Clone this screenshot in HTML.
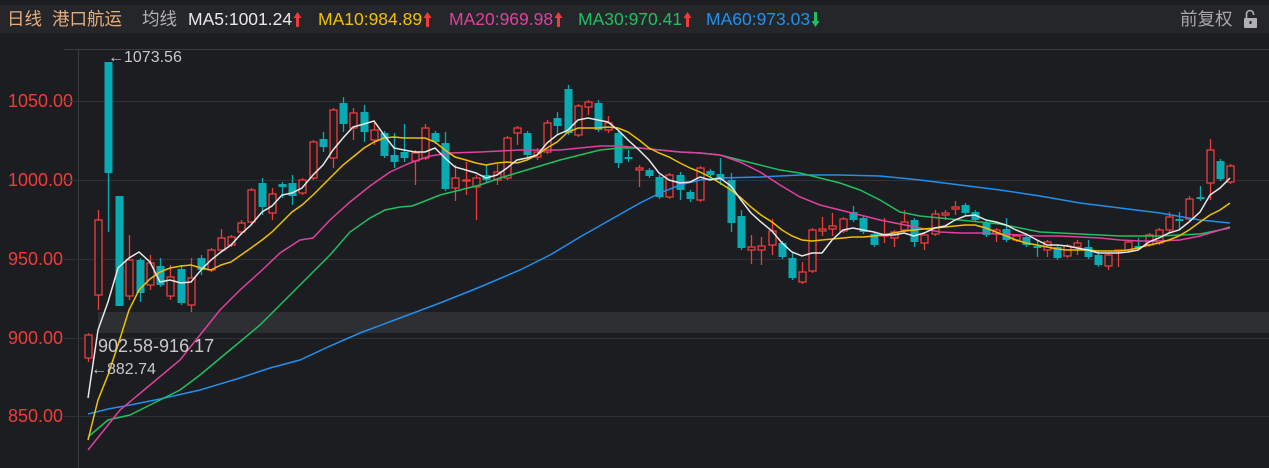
<!DOCTYPE html>
<html><head><meta charset="utf-8"><style>
body{margin:0;width:1269px;height:468px;background:#1c1d21;overflow:hidden;font-family:"Liberation Sans","Noto Sans CJK SC",sans-serif;position:relative}
.hdr{position:absolute;left:0;top:5px;width:1269px;height:28px;background:#25262a}
.t{position:absolute;top:9px;font-size:17.5px;line-height:20px;white-space:nowrap}
.t svg{position:static;vertical-align:-2px;margin-left:1px}
.ax{position:absolute;left:8px;font-size:18px;line-height:20px;color:#f03b3b}
.an{position:absolute;font-size:16px;color:#c8c8c8;white-space:nowrap}
#s{position:absolute;left:0;top:0}
</style></head><body>
<div class="hdr"></div>
<div class="t" style="left:7px;color:#e6ad7e">日线</div>
<div class="t" style="left:52px;color:#e6ad7e">港口航运</div>
<div class="t" style="left:142px;color:#b0b0b0">均线</div>
<div class="t" style="left:188px;color:#e8e8e8">MA5:1001.24<svg width="9" height="16"><path d="M4.5 1L8.5 7H6V16H3V7H0.5Z" fill="#f03b3b"/></svg></div>
<div class="t" style="left:318px;color:#f0c000">MA10:984.89<svg width="9" height="16"><path d="M4.5 1L8.5 7H6V16H3V7H0.5Z" fill="#f03b3b"/></svg></div>
<div class="t" style="left:449px;color:#e040a0">MA20:969.98<svg width="9" height="16"><path d="M4.5 1L8.5 7H6V16H3V7H0.5Z" fill="#f03b3b"/></svg></div>
<div class="t" style="left:578px;color:#20c060">MA30:970.41<svg width="9" height="16"><path d="M4.5 1L8.5 7H6V16H3V7H0.5Z" fill="#f03b3b"/></svg></div>
<div class="t" style="left:706px;color:#2090f0">MA60:973.03<svg width="9" height="16"><path d="M4.5 16L8.5 10H6V1H3V10H0.5Z" fill="#20c060"/></svg></div>
<div class="t" style="left:1180px;color:#a8a8a8">前复权</div>
<div class="ax" style="top:91px">1050.00</div>
<div class="ax" style="top:170px">1000.00</div>
<div class="ax" style="top:249px">950.00</div>
<div class="ax" style="top:328px">900.00</div>
<div class="ax" style="top:406px">850.00</div>
<svg id="s" width="1269" height="468"></svg>
<div class="an" style="left:108px;top:49px">←1073.56</div>
<div class="an" style="left:98px;top:336px;font-size:18px">902.58-916.17</div>
<div class="an" style="left:91px;top:361px">←882.74</div>
<script>
var s='';
s+='<rect x="98" y="312" width="1171" height="21" fill="#2e2f33"/>';
s+='<line x1="64" y1="49.5" x2="1269" y2="49.5" stroke="#3a3b3f"/>';
s+='<line x1="78.5" y1="49" x2="78.5" y2="468" stroke="#3a3b3f"/>';
[101,180,259,338,416].forEach(function(y){s+='<line x1="64" y1="'+(y+.5)+'" x2="1269" y2="'+(y+.5)+'" stroke="#303135"/>';});
s+='<rect x="1244" y="18" width="13" height="10" rx="1" fill="#b0b0b0"/><path d="M1246.5 18v-4a3.5 3.5 0 0 1 7 0v1" fill="none" stroke="#b0b0b0" stroke-width="1.6"/><rect x="1249.5" y="21" width="2" height="3" fill="#25262a"/>';
function pl(p,c){s+='<polyline fill="none" stroke="'+c+'" stroke-width="1.5" points="'+p+'"/>';}
var R=[[88,335,358,333,362],[98,220,295,210,310],[129,260,296,235,300],[150,263,285,255,290],[170,277,296,265,300],[191,278,305,258,312],[211,250,270,248,272],[221,238,250,229,252],[231,237,245,235,247],[241,223,232,220,235],[251,190,222,188,224],[272,194,213,188,220],[302,180,193,178,195],[313,142,178,140,180],[333,110,158,108,168],[353,113,128,108,140],[374,130,140,123,145],[415,153,161,150,185],[425,128,158,124,160],[455,178,188,165,201],[466,180,181,162,195],[476,178,187,175,220],[497,172,180,164,185],[507,138,178,136,180],[517,128,133,126,145],[537,152,157,148,160],[547,123,152,120,154],[578,106,135,104,137],[588,102,107,100,115],[608,123,130,116,133],[639,168,170,165,187],[669,175,197,173,199],[700,168,200,166,202],[751,247,250,235,264],[761,246,250,237,265],[772,231,245,219,255],[802,272,282,262,284],[812,230,271,228,273],[822,229,231,217,236],[832,226,229,213,236],[843,219,231,217,233],[884,234,236,218,243],[894,232,238,230,247],[904,222,230,210,232],[924,235,243,233,250],[935,214,234,210,236],[945,213,215,210,220],[955,207,209,201,215],[996,230,234,228,242],[1016,236,240,234,242],[1047,242,250,240,257],[1067,246,256,244,258],[1077,243,247,240,255],[1108,255,266,253,270],[1118,250,251,250,267],[1128,242,250,240,252],[1149,235,245,233,247],[1159,230,243,228,245],[1169,217,230,212,232],[1189,199,219,196,221],[1210,150,183,139,200],[1230,166,182,164,184]];
var T=[[108,62,173,62,232],[119,196,306,196,306],[140,260,293,258,302],[160,266,285,258,287],[181,269,303,265,305],[201,258,270,255,275],[262,183,207,178,215],[282,184,187,182,198],[292,183,196,175,205],[323,139,147,132,152],[343,103,124,97,132],[364,112,132,105,142],[384,133,156,131,158],[394,155,162,133,168],[404,152,158,124,162],[435,133,142,131,144],[445,143,189,132,191],[486,175,180,165,182],[527,133,155,131,157],[557,118,126,112,135],[568,89,133,85,135],[598,103,130,100,132],[618,133,163,131,168],[628,157,159,150,162],[649,170,176,168,178],[659,177,197,175,199],[680,175,190,172,200],[690,192,199,190,202],[710,171,175,169,177],[720,174,180,158,185],[731,180,223,173,232],[741,216,248,210,250],[782,243,257,241,259],[792,258,278,253,280],[853,212,220,206,222],[863,218,232,216,234],[874,234,245,232,247],[914,220,242,218,247],[965,205,213,203,215],[975,212,220,210,222],[986,223,235,221,237],[1006,229,240,218,242],[1026,237,245,235,247],[1037,246,247,240,257],[1057,247,258,245,260],[1088,247,257,240,259],[1098,255,265,250,267],[1138,246,248,238,250],[1179,219,221,212,230],[1200,197,199,186,201],[1220,161,179,159,181]];
R.forEach(function(c){s+='<line x1="'+(c[0]+.5)+'" y1="'+c[3]+'" x2="'+(c[0]+.5)+'" y2="'+c[4]+'" stroke="#f03b3b" stroke-width="1.3"/><rect x="'+(c[0]-3)+'" y="'+c[1]+'" width="7" height="'+Math.max(1,c[2]-c[1])+'" fill="#1c1d21" stroke="#f03b3b" stroke-width="1.3"/>';});
T.forEach(function(c){s+='<line x1="'+(c[0]+.5)+'" y1="'+c[3]+'" x2="'+(c[0]+.5)+'" y2="'+c[4]+'" stroke="#08aab4" stroke-width="1.3"/><rect x="'+(c[0]-3.5)+'" y="'+c[1]+'" width="8" height="'+Math.max(2,c[2]-c[1])+'" fill="#08aab4"/>';});
pl("88,414 108,409 130,405 160,399 200,390 240,378 270,368 300,360 330,346 360,333 400,318 440,303 480,287 520,270 550,255 580,237 610,220 640,203 660,193 680,185 700,180 720,178 760,177 800,175 840,175 880,176 920,180 960,185 1000,190 1040,196 1080,203 1120,208 1160,213 1200,220 1230,223","#2090f0");
pl("88,437 108,420 130,415 150,405 180,390 200,375 230,350 260,325 290,295 310,275 330,255 350,232 370,218 385,210 400,207 412,206 420,203 440,195 460,190 480,185 500,178 520,172 540,166 560,160 580,155 600,150 620,148 640,148 660,150 680,152 700,153 720,155 740,160 760,165 780,170 800,173 820,178 840,183 860,190 880,200 900,212 920,216 940,218 960,220 980,222 1000,224 1020,228 1040,232 1060,233 1080,234 1100,235 1120,236 1140,236 1160,236 1180,235 1200,234 1220,230 1230,227","#20c060");
pl("88,450 100,435 120,410 150,385 180,360 200,335 220,310 240,290 260,272 280,253 300,240 313,238 330,220 350,202 370,186 390,172 410,163 430,156 450,153 480,152 500,151 520,150 540,150 560,150 580,148 600,146 620,146 640,148 660,150 680,152 700,153 720,155 740,162 760,172 780,185 800,197 820,205 840,210 860,215 880,220 900,224 920,228 940,232 960,233 980,233 1000,234 1020,235 1040,236 1060,236 1080,237 1100,238 1120,240 1140,241 1160,241 1180,240 1200,236 1220,230 1230,228","#e040a0");
pl("88,440 98,400 108,375 118,345 129,310 139,290 150,279 160,272 170,268 181,266 191,265 201,268 211,270 221,265 231,262 241,255 251,248 262,240 272,232 282,222 292,212 302,205 313,195 323,185 333,175 343,165 353,157 364,148 374,142 384,138 394,137 404,138 415,138 425,138 435,142 445,150 455,157 466,160 476,163 486,165 497,163 507,162 517,163 527,160 537,155 547,148 557,142 568,132 578,128 588,128 598,128 608,127 618,128 628,132 639,140 649,148 659,153 669,157 680,163 690,168 700,172 710,177 720,183 731,190 741,198 751,207 761,215 772,222 782,230 792,236 802,240 812,241 822,240 832,239 843,238 853,237 863,237 874,236 884,235 894,233 904,231 914,230 924,229 935,228 945,227 955,226 965,225 975,225 986,228 996,232 1006,236 1016,240 1026,243 1037,245 1047,247 1057,249 1067,250 1077,250 1088,250 1098,251 1108,251 1118,251 1128,250 1138,248 1149,245 1159,243 1169,240 1179,236 1189,230 1200,222 1210,215 1220,210 1230,203","#f0c000");
pl("88,398 98,330 108,302 118,268 129,258 139,252 150,262 160,282 170,280 181,283 191,282 201,270 211,260 221,252 231,245 241,234 251,225 262,212 272,206 282,195 292,193 302,188 313,175 323,165 333,150 343,138 353,127 364,124 374,121 384,135 394,148 404,150 415,152 425,152 435,148 445,158 455,167 466,170 476,173 486,178 497,175 507,168 517,160 527,158 537,155 547,143 557,135 568,130 578,120 588,118 598,120 608,122 618,130 628,140 639,150 649,160 659,173 669,180 680,183 690,182 700,177 710,180 720,178 731,186 741,200 751,213 761,222 772,231 782,243 792,252 802,256 812,253 822,253 832,240 843,230 853,228 863,230 874,232 884,235 894,235 904,233 914,236 924,233 935,228 945,226 955,220 965,216 975,215 986,220 996,222 1006,225 1016,230 1026,234 1037,240 1047,245 1057,245 1067,246 1077,248 1088,250 1098,253 1108,253 1118,253 1128,252 1138,250 1149,242 1159,238 1169,233 1179,230 1189,222 1200,212 1210,195 1220,188 1230,178","#e8e8e8");
document.getElementById('s').innerHTML=s;
</script>
</body></html>
